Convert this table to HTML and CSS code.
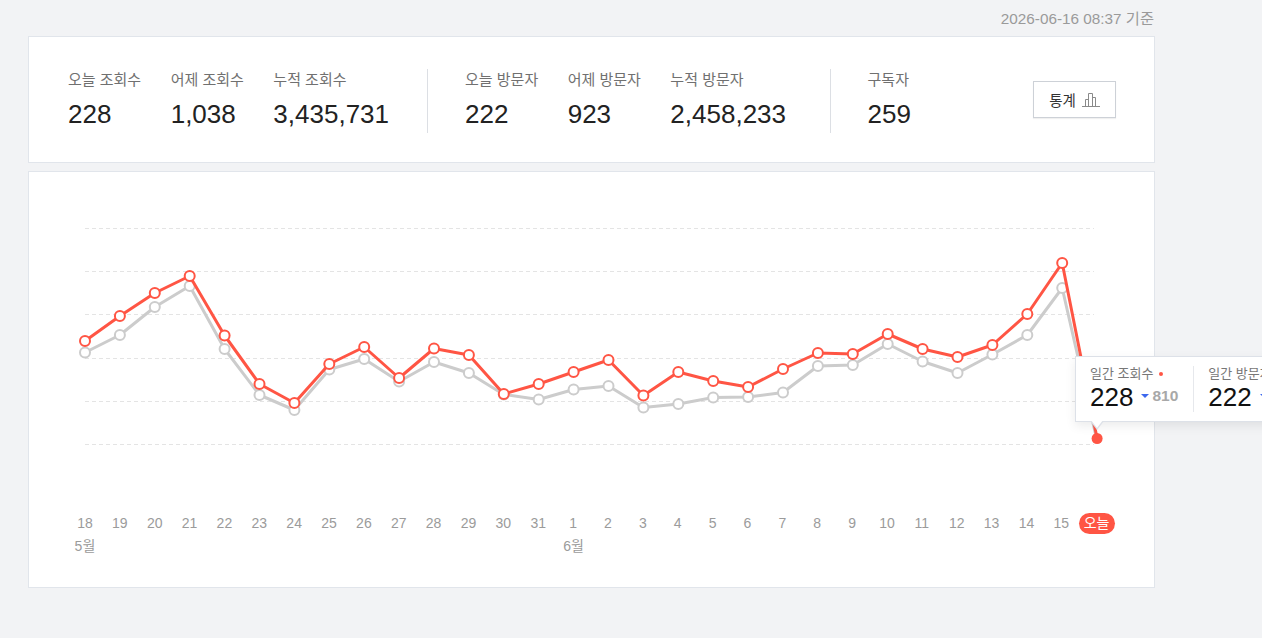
FILE: index.html
```html
<!DOCTYPE html>
<html lang="ko">
<head>
<meta charset="utf-8">
<title>통계</title>
<link rel="stylesheet" href="styles.css">
</head>
<body>
<div class="page">
  <div class="topbar"><span class="stamp">2026-06-16 08:37 기준</span></div>

  <section class="card summary">
    <div class="stats">
      <div class="stat"><div class="stat-label">오늘 조회수</div><div class="stat-value">228</div></div>
      <div class="stat"><div class="stat-label">어제 조회수</div><div class="stat-value">1,038</div></div>
      <div class="stat last"><div class="stat-label">누적 조회수</div><div class="stat-value">3,435,731</div></div>
      <div class="sep"></div>
      <div class="stat"><div class="stat-label">오늘 방문자</div><div class="stat-value">222</div></div>
      <div class="stat"><div class="stat-label">어제 방문자</div><div class="stat-value">923</div></div>
      <div class="stat last"><div class="stat-label">누적 방문자</div><div class="stat-value">2,458,233</div></div>
      <div class="sep wide"></div>
      <div class="stat last"><div class="stat-label">구독자</div><div class="stat-value">259</div></div>
      <button class="btn" type="button">통계
        <svg class="btn-icon" width="18" height="14" viewBox="0 0 18 14" aria-hidden="true">
          <path d="M0 13.5H18" stroke="#8a8a8a" stroke-width="1" fill="none"/>
          <path d="M3.5 13.5V6.5H6.5V13.5" stroke="#8a8a8a" stroke-width="1" fill="none"/>
          <path d="M6.5 13.5V0.5H10.5V13.5" stroke="#8a8a8a" stroke-width="1" fill="none"/>
          <path d="M10.5 13.5V4.5H13.5V13.5" stroke="#8a8a8a" stroke-width="1" fill="none"/>
        </svg>
      </button>
    </div>
  </section>

  <section class="card chart-card">
    <svg class="chart" width="1125" height="290" viewBox="29 172 1125 290" aria-hidden="true">
      <g stroke="#e4e4e4" stroke-width="1" stroke-dasharray="4 3">
        <line x1="85" y1="228.5" x2="1094" y2="228.5"/>
        <line x1="85" y1="271.5" x2="1094" y2="271.5"/>
        <line x1="85" y1="314.5" x2="1094" y2="314.5"/>
        <line x1="85" y1="358.5" x2="1094" y2="358.5"/>
        <line x1="85" y1="401.5" x2="1094" y2="401.5"/>
        <line x1="85" y1="444.5" x2="1094" y2="444.5"/>
      </g>
      <polyline fill="none" stroke="#cccccc" stroke-width="3" stroke-linejoin="round" points="85,352.5 119.9,335 154.8,307 189.7,286 224.6,349 259.5,395 294.4,410 329.3,369.5 364.2,359 399.1,381.5 434,362 468.9,373 503.8,394.5 538.7,399.5 573.6,389.5 608.5,386 643.4,407.5 678.3,404 713.2,397.5 748.1,397 783,392.5 817.9,366 852.8,365 887.7,344 922.6,361.5 957.5,373 992.4,354.5 1027.3,335 1062.2,288 1097.1,441"/>
      <g fill="#fff" stroke="#cccccc" stroke-width="2">
        <circle cx="85" cy="352.5" r="5"/><circle cx="119.9" cy="335" r="5"/><circle cx="154.8" cy="307" r="5"/><circle cx="189.7" cy="286" r="5"/><circle cx="224.6" cy="349" r="5"/><circle cx="259.5" cy="395" r="5"/><circle cx="294.4" cy="410" r="5"/><circle cx="329.3" cy="369.5" r="5"/><circle cx="364.2" cy="359" r="5"/><circle cx="399.1" cy="381.5" r="5"/><circle cx="434" cy="362" r="5"/><circle cx="468.9" cy="373" r="5"/><circle cx="503.8" cy="394.5" r="5"/><circle cx="538.7" cy="399.5" r="5"/><circle cx="573.6" cy="389.5" r="5"/><circle cx="608.5" cy="386" r="5"/><circle cx="643.4" cy="407.5" r="5"/><circle cx="678.3" cy="404" r="5"/><circle cx="713.2" cy="397.5" r="5"/><circle cx="748.1" cy="397" r="5"/><circle cx="783" cy="392.5" r="5"/><circle cx="817.9" cy="366" r="5"/><circle cx="852.8" cy="365" r="5"/><circle cx="887.7" cy="344" r="5"/><circle cx="922.6" cy="361.5" r="5"/><circle cx="957.5" cy="373" r="5"/><circle cx="992.4" cy="354.5" r="5"/><circle cx="1027.3" cy="335" r="5"/><circle cx="1062.2" cy="288" r="5"/>
      </g>
      <polyline fill="none" stroke="#ff5544" stroke-width="3" stroke-linejoin="round" points="85,341 119.9,316 154.8,293 189.7,276 224.6,335.5 259.5,384 294.4,403 329.3,364 364.2,347 399.1,378 434,348.5 468.9,355 503.8,394 538.7,384 573.6,372 608.5,360 643.4,395.5 678.3,372 713.2,381 748.1,387 783,369 817.9,353 852.8,354 887.7,334 922.6,349 957.5,357 992.4,345 1027.3,314 1062.2,263 1097.1,438.5"/>
      <g fill="#fff" stroke="#ff5544" stroke-width="2">
        <circle cx="85" cy="341" r="5"/><circle cx="119.9" cy="316" r="5"/><circle cx="154.8" cy="293" r="5"/><circle cx="189.7" cy="276" r="5"/><circle cx="224.6" cy="335.5" r="5"/><circle cx="259.5" cy="384" r="5"/><circle cx="294.4" cy="403" r="5"/><circle cx="329.3" cy="364" r="5"/><circle cx="364.2" cy="347" r="5"/><circle cx="399.1" cy="378" r="5"/><circle cx="434" cy="348.5" r="5"/><circle cx="468.9" cy="355" r="5"/><circle cx="503.8" cy="394" r="5"/><circle cx="538.7" cy="384" r="5"/><circle cx="573.6" cy="372" r="5"/><circle cx="608.5" cy="360" r="5"/><circle cx="643.4" cy="395.5" r="5"/><circle cx="678.3" cy="372" r="5"/><circle cx="713.2" cy="381" r="5"/><circle cx="748.1" cy="387" r="5"/><circle cx="783" cy="369" r="5"/><circle cx="817.9" cy="353" r="5"/><circle cx="852.8" cy="354" r="5"/><circle cx="887.7" cy="334" r="5"/><circle cx="922.6" cy="349" r="5"/><circle cx="957.5" cy="357" r="5"/><circle cx="992.4" cy="345" r="5"/><circle cx="1027.3" cy="314" r="5"/><circle cx="1062.2" cy="263" r="5"/>
      </g>
      <circle cx="1097.1" cy="438.5" r="5.5" fill="#ff5544"/>
    </svg>

    <div class="axis">
      <span>18</span><span>19</span><span>20</span><span>21</span><span>22</span><span>23</span><span>24</span><span>25</span><span>26</span><span>27</span><span>28</span><span>29</span><span>30</span><span>31</span><span>1</span><span>2</span><span>3</span><span>4</span><span>5</span><span>6</span><span>7</span><span>8</span><span>9</span><span>10</span><span>11</span><span>12</span><span>13</span><span>14</span><span>15</span><span class="today">오늘</span>
    </div>
    <div class="axis months">
      <span class="m-may">5월</span><span class="m-jun">6월</span>
    </div>

    <div class="tip">
      <div class="tip-col first">
        <div class="tip-label">일간 조회수 <i class="dot"></i></div>
        <div class="tip-row"><span class="tip-num">228</span><i class="down"></i><span class="tip-diff">810</span></div>
      </div>
      <div class="tip-sep"></div>
      <div class="tip-col">
        <div class="tip-label">일간 방문자</div>
        <div class="tip-row"><span class="tip-num">222</span><i class="down"></i><span class="tip-diff">701</span></div>
      </div>
    </div>
  </section>
</div>
</body>
</html>
```

FILE: styles.css
```css
html, body {
  margin: 0;
  padding: 0;
  overflow: hidden;
  background: #f2f3f5;
}
body {
  font-family: "Liberation Sans", "Noto Sans CJK KR", sans-serif;
  color: #222;
}
.page {
  width: 1127px;
  margin-left: 28px;
  padding-bottom: 50px;
}
.topbar {
  height: 36px;
  display: flex;
  align-items: center;
  justify-content: flex-end;
  padding-right: 1px;
}
.stamp {
  font-size: 15.3px;
  color: #9a9a9a;
  margin-top: -2px;
}
.card {
  background: #fff;
  border: 1px solid #e1e5eb;
}
.summary {
  padding: 32px 38px 29px 39px;
}
.stats {
  display: flex;
  align-items: flex-start;
  height: 64px;
}
.stat {
  margin-right: 29.5px;
}
.stat.last {
  margin-right: 0;
}
.stat-label {
  font-size: 15px;
  line-height: 22px;
  color: #707070;
  white-space: nowrap;
}
.stat-value {
  margin-top: 7px;
  font-size: 26px;
  line-height: 32px;
  color: #222;
  white-space: nowrap;
}
.sep {
  width: 1px;
  height: 64px;
  background: #dcdfe4;
  margin: 0 37px 0 38px;
}
.sep.wide {
  margin-left: 43.5px;
}
.btn {
  margin-left: auto;
  margin-top: 12px;
  height: 37px;
  width: 83px;
  padding: 0 14px;
  display: flex;
  align-items: center;
  justify-content: center;
  gap: 6px;
  background: #fff;
  border: 1px solid #cdd1d7;
  box-shadow: 0 1px 1px rgba(0, 0, 0, 0.06);
  font-family: "Liberation Sans", "Noto Sans CJK KR", sans-serif;
  font-size: 14.5px;
  color: #333;
  cursor: pointer;
}
.btn-icon {
  display: block;
  margin-top: 1px;
}
.chart-card {
  position: relative;
  margin-top: 8px;
  padding-bottom: 31px;
}
.chart {
  display: block;
}
.axis {
  display: grid;
  grid-template-columns: repeat(30, 1fr);
  width: 1047px;
  margin-left: 38.5px;
  margin-top: 51px;
  height: 21px;
  font-size: 14px;
  line-height: 21px;
  color: #9b9b9b;
  text-align: center;
}
.axis span {
  justify-self: center;
  white-space: nowrap;
}
.axis .today {
  background: #ff5544;
  color: #fff;
  border-radius: 11px;
  padding: 0 5px;
  font-size: 14px;
  height: 21px;
}
.axis.months {
  margin-top: 2px;
  height: 20px;
  line-height: 20px;
}
.m-may { grid-column: 1; }
.m-jun { grid-column: 15; }

.tip {
  position: absolute;
  left: 1046px;
  top: 184px;
  display: flex;
  background: #fff;
  border: 1px solid #dde1e8;
  box-shadow: 0 4px 10px rgba(0, 0, 0, 0.08);
  padding: 8px 0 10px;
  white-space: nowrap;
}
.tip::before,
.tip::after {
  content: "";
  position: absolute;
  left: 14px;
  width: 0;
  height: 0;
  border-left: 7px solid transparent;
  border-right: 7px solid transparent;
}
.tip::before {
  bottom: -9px;
  border-top: 9px solid #dde1e8;
}
.tip::after {
  left: 15px;
  bottom: -7px;
  border-left-width: 6px;
  border-right-width: 6px;
  border-top: 8px solid #fff;
}
.tip-col {
  padding: 0 14px 0 14px;
}
.tip-col.first {
  padding-right: 15px;
}
.tip-sep {
  width: 1px;
  background: #e6e8ec;
  margin: 1px 0 -1px;
}
.tip-col + .tip-sep + .tip-col {
  padding-left: 14px;
  padding-right: 40px;
}
.tip-label {
  font-size: 13px;
  line-height: 18px;
  color: #777;
  display: flex;
  align-items: center;
}
.dot {
  display: inline-block;
  width: 4px;
  height: 4px;
  border-radius: 50%;
  background: #ff5544;
  margin-left: 6px;
}
.tip-row {
  display: flex;
  align-items: center;
  height: 28px;
}
.tip-num {
  font-size: 26px;
  line-height: 28px;
  color: #111;
}
.down {
  display: inline-block;
  width: 0;
  height: 0;
  border-left: 4px solid transparent;
  border-right: 4px solid transparent;
  border-top: 4px solid #3d68ee;
  margin: -2px 3px 0 8px;
}
.tip-diff {
  font-size: 15.5px;
  font-weight: bold;
  color: #a8a8a8;
  margin-top: -3px;
}
```
